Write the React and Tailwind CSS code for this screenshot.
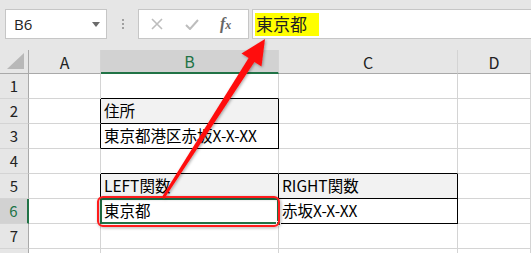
import React from "react";

function Cell({ children, cls = "" }) {
  return (
    <div className={`flex items-center overflow-visible whitespace-nowrap pl-[3px] text-[15.5px] text-black ${cls}`}>
      {children}
    </div>
  );
}

export default function App() {
  const bR = "border-r border-r-black";
  const bB = "border-b border-b-black";
  const gR = "border-r border-r-[#d4d4d4]";
  const gB = "border-b border-b-[#d4d4d4]";

  const rowHeader = (n, sel = false, label = true) => (
    <div
      key={"rh" + n}
      className={`flex items-center justify-center border-b border-b-[#d4d4d4] text-[15px] ${
        sel ? "bg-[#d2d2d2] border-r-2 border-r-[#217346] text-[#217346]" : "bg-[#e6e6e6] border-r border-r-[#a9a9a9] text-[#222]"
      }`}
    >
      {label ? n : null}
    </div>
  );

  return (
    <div
      className="relative h-[253px] w-[531px] overflow-hidden bg-white"
      style={{ fontFamily: '"Noto Sans CJK JP", "Noto Sans", sans-serif' }}
    >
      {/* toolbar */}
      <div className="flex h-[50px] items-start bg-[#e6e6e6] pt-[9px] pl-[5px]">
        <div className="flex h-[30px] w-[102px] items-center justify-between border border-[#c6c6c6] bg-white pl-[8px] pr-[6px]">
          <span className="text-[15px] text-[#222]" style={{ fontFamily: '"Open Sans", sans-serif' }}>B6</span>
          <svg width="8" height="5" viewBox="0 0 8 5"><path d="M0 0h8L4 5z" fill="#6b6b6b" /></svg>
        </div>
        <div className="flex h-[30px] w-[31px] flex-col items-center justify-center gap-[2px]">
          <span className="h-[2px] w-[2px] bg-[#a0a0a0]" />
          <span className="h-[2px] w-[2px] bg-[#a0a0a0]" />
          <span className="h-[2px] w-[2px] bg-[#a0a0a0]" />
        </div>
        <div className="flex h-[30px] w-[111px] items-center border border-[#c6c6c6] bg-white">
          <svg className="ml-[12px]" width="12" height="12" viewBox="0 0 12 12">
            <path d="M1 1L11 11M11 1L1 11" stroke="#bdbdbd" strokeWidth="1.6" />
          </svg>
          <svg className="ml-[22px]" width="14" height="11" viewBox="0 0 14 11">
            <path d="M1 6l4 4L13 1" stroke="#bdbdbd" strokeWidth="2" fill="none" />
          </svg>
          <span
            className="ml-[21px] text-[16px] font-bold italic text-[#666]"
            style={{ fontFamily: '"Liberation Serif", serif' }}
          >
            f<span className="text-[12px]">x</span>
          </span>
        </div>
        <div className="ml-[3px] flex h-[30px] flex-1 items-center border border-r-0 border-[#c6c6c6] bg-white pl-[2px]">
          <span className="flex h-[23px] w-[64px] items-center bg-[#ffff00] pl-[1px] text-[17px] text-[#222]">
            東京都
          </span>
        </div>
      </div>

      {/* grid */}
      <div
        className="grid"
        style={{
          gridTemplateColumns: "29px 72px 178px 179px 73px",
          gridTemplateRows: "24px repeat(7, 25px) 25px",
        }}
      >
        <div className="relative border-r border-b border-[#a9a9a9] bg-[#e6e6e6]">
          <svg className="absolute left-[7px] top-[3px]" width="18" height="17" viewBox="0 0 18 17">
            <path d="M17 0V16H0z" fill="#b8b8b8" />
          </svg>
        </div>
        <div className="flex items-center justify-center border-r border-r-[#d4d4d4] border-b border-b-[#a9a9a9] bg-[#e6e6e6] text-[16px] text-[#222]">A</div>
        <div className="flex items-center justify-center border-r border-r-[#d4d4d4] border-b-2 border-b-[#217346] bg-[#d2d2d2] text-[16px] text-[#217346]">B</div>
        <div className="flex items-center justify-center border-r border-r-[#d4d4d4] border-b border-b-[#a9a9a9] bg-[#e6e6e6] text-[16px] text-[#222]">C</div>
        <div className="flex items-center justify-center border-r border-r-[#d4d4d4] border-b border-b-[#a9a9a9] bg-[#e6e6e6] text-[16px] text-[#222]">D</div>

        {rowHeader(1)}
        <Cell cls={`${gR} ${gB}`} />
        <Cell cls={`${gR} ${bB}`} />
        <Cell cls={`${gR} ${gB}`} />
        <Cell cls={`${gR} ${gB}`} />

        {rowHeader(2)}
        <Cell cls={`${bR} ${gB}`} />
        <Cell cls={`${bR} ${bB} bg-[#f2f2f2]`}>住所</Cell>
        <Cell cls={`${gR} ${gB}`} />
        <Cell cls={`${gR} ${gB}`} />

        {rowHeader(3)}
        <Cell cls={`${bR} ${gB}`} />
        <Cell cls={`${bR} ${bB}`}>東京都港区赤坂X-X-XX</Cell>
        <Cell cls={`${gR} ${gB}`} />
        <Cell cls={`${gR} ${gB}`} />

        {rowHeader(4)}
        <Cell cls={`${gR} ${gB}`} />
        <Cell cls={`${gR} ${bB}`} />
        <Cell cls={`${gR} ${bB}`} />
        <Cell cls={`${gR} ${gB}`} />

        {rowHeader(5)}
        <Cell cls={`${bR} ${gB}`} />
        <Cell cls={`${bR} ${bB} bg-[#f2f2f2]`}>LEFT関数</Cell>
        <Cell cls={`${bR} ${bB} bg-[#f2f2f2]`}>RIGHT関数</Cell>
        <Cell cls={`${gR} ${gB}`} />

        {rowHeader(6, true)}
        <Cell cls={`${bR} ${gB}`} />
        <Cell cls={`${bR} ${bB} relative`}>
          東京都
          <div className="absolute -left-[1px] -top-[1px] h-[26px] w-[179px] border-2 border-[#217346]" />
          <div className="absolute -bottom-[3px] -right-[3px] h-[5px] w-[5px] border border-white bg-[#217346]" />
        </Cell>
        <Cell cls={`${bR} ${bB}`}>赤坂X-X-XX</Cell>
        <Cell cls={`${gR} ${gB}`} />

        {rowHeader(7)}
        <Cell cls={`${gR} ${gB}`} />
        <Cell cls={`${gR} ${gB}`} />
        <Cell cls={`${gR} ${gB}`} />
        <Cell cls={`${gR} ${gB}`} />

        {rowHeader(8, false, false)}
        <Cell cls={`${gR} ${gB}`} />
        <Cell cls={`${gR} ${gB}`} />
        <Cell cls={`${gR} ${gB}`} />
        <Cell cls={`${gR} ${gB}`} />
      </div>

      {/* annotation overlay */}
      <svg
        className="pointer-events-none absolute left-0 top-0"
        width="531"
        height="253"
        viewBox="0 0 531 253"
      >
        <defs>
          <filter id="sh" x="-20%" y="-20%" width="140%" height="140%">
            <feDropShadow dx="1" dy="1" stdDeviation="1.6" floodColor="#000" floodOpacity="0.35" />
          </filter>
        </defs>
        <g filter="url(#sh)">
          <rect x="98" y="197" width="181" height="29" rx="5" fill="none" stroke="#ff1a1a" strokeWidth="2" />
          <polygon
            points="265,39 241.5,53.6 248.6,58.1 161.8,197.3 164.2,198.7 254.4,61.9 261.5,66.4"
            fill="#ff1010"
          />
        </g>
      </svg>
    </div>
  );
}
